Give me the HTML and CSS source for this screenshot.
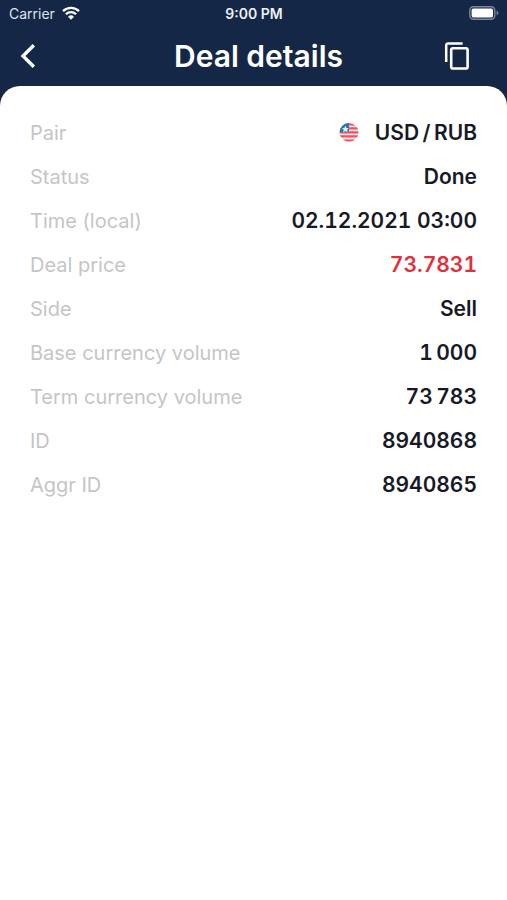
FILE: index.html
```html
<!DOCTYPE html>
<html lang="en">
<head>
<meta charset="utf-8">
<meta name="viewport" content="width=device-width, initial-scale=1">
<title>Deal details</title>
<link rel="stylesheet" href="styles.css">
</head>
<body>
<div class="status-bar">
  <div class="carrier">
    <span>Carrier</span>
    <svg class="wifi" viewBox="0 0 18 14" aria-hidden="true">
      <path d="M1 5.2a11.5 11.5 0 0 1 16 0M3.9 8.2a7.3 7.3 0 0 1 10.2 0" fill="none" stroke="currentColor" stroke-width="2.3"/>
      <path d="M9 13.8 6 10.8a4.3 4.3 0 0 1 6 0z" fill="currentColor"/>
    </svg>
  </div>
  <time class="clock">9:00 PM</time>
  <svg class="battery" viewBox="0 0 30 14" aria-hidden="true">
    <rect x="0.8" y="0.8" width="25" height="12.4" rx="3.6" fill="none" stroke="#7d879b" stroke-width="1.4"/>
    <rect x="2.6" y="2.6" width="21.4" height="8.8" rx="1.6" fill="#fff"/>
    <path d="M27.6 4.6c2.4 1 2.4 3.8 0 4.8z" fill="#7d879b"/>
  </svg>
</div>
<header class="nav">
  <button class="icon-button" type="button" aria-label="Back">
    <svg class="back-icon" viewBox="0 0 16 26" aria-hidden="true">
      <path d="M13.8 2.2 3 13l10.8 10.8" fill="none" stroke="currentColor" stroke-width="3.4"/>
    </svg>
  </button>
  <h1 class="title">Deal details</h1>
  <button class="icon-button" type="button" aria-label="Copy">
    <svg class="copy-icon" viewBox="0 0 26 28" aria-hidden="true">
      <path d="M2.2 20V3.4a2 2 0 0 1 2-2H18.6" fill="none" stroke="currentColor" stroke-width="2.5"/>
      <rect x="7.2" y="6.3" width="16.4" height="20.2" rx="1.8" fill="none" stroke="currentColor" stroke-width="2.6"/>
    </svg>
  </button>
</header>
<main class="sheet">
  <dl class="details">
    <div class="row">
      <dt>Pair</dt>
      <dd class="pair">
        <svg class="flag" viewBox="0 0 20 20" aria-hidden="true">
          <clipPath id="flag-disc"><circle cx="10" cy="9.4" r="9.4"/></clipPath>
          <g clip-path="url(#flag-disc)">
            <path d="M0 0h20v20H0z" fill="#f9e3e8"/>
            <path d="M0 1.4h20M0 5.4h20M0 9.4h20M0 13.4h20M0 17.6h20" stroke="#ee5263" stroke-width="2.1"/>
            <path d="M0 0h10v9H0z" fill="#2578b4"/>
            <path d="m6.4 2.7 1.1 2.2 2.3.3-1.7 1.6.5 2.4-2.2-1.2-2.2 1.2.5-2.4L3 5.2l2.3-.3z" fill="#e8f4fb"/>
          </g>
        </svg>
        <span>USD&#8201;/&#8201;RUB</span>
      </dd>
    </div>
    <div class="row"><dt>Status</dt><dd>Done</dd></div>
    <div class="row"><dt>Time (local)</dt><dd>02.12.2021 03:00</dd></div>
    <div class="row"><dt>Deal price</dt><dd class="sell">73.7831</dd></div>
    <div class="row"><dt>Side</dt><dd>Sell</dd></div>
    <div class="row"><dt>Base currency volume</dt><dd>1&#8201;000</dd></div>
    <div class="row"><dt>Term currency volume</dt><dd>73&#8201;783</dd></div>
    <div class="row"><dt>ID</dt><dd>8940868</dd></div>
    <div class="row"><dt>Aggr ID</dt><dd>8940865</dd></div>
  </dl>
</main>
</body>
</html>
```
FILE: styles.css
```css
* {
  box-sizing: border-box;
}

body {
  margin: 0;
  min-height: 100vh;
  display: flex;
  flex-direction: column;
  background: #152747;
  color: #fff;
  font-family: Inter, "Liberation Sans", sans-serif;
}

.status-bar {
  display: grid;
  grid-template-columns: 1fr auto 1fr;
  align-items: center;
  height: 26px;
  padding: 0 8px 0 9px;
  font-size: 14px;
}

.carrier {
  display: flex;
  align-items: center;
  gap: 7px;
  color: #dfe3ea;
}

.wifi {
  width: 18px;
  height: 14px;
  color: #fff;
}

.clock {
  font-weight: 600;
  color: #eef0f4;
}

.battery {
  width: 30px;
  height: 14px;
  justify-self: end;
}

.nav {
  display: grid;
  grid-template-columns: 44px 1fr 44px;
  align-items: center;
  height: 60px;
  padding: 0 28px 0 6px;
}

.icon-button {
  display: grid;
  place-items: center;
  width: 44px;
  height: 44px;
  padding: 0;
  border: 0;
  background: none;
  color: #fff;
}

.back-icon {
  width: 16px;
  height: 26px;
}

.copy-icon {
  width: 26px;
  height: 28px;
}

.title {
  margin: 0;
  padding-left: 32px;
  font-size: 30px;
  line-height: 36px;
  font-weight: 600;
  text-align: center;
}

.sheet {
  flex: 1;
  padding: 25px 30px;
  border-radius: 20px 20px 0 0;
  background: #fff;
}

.details {
  margin: 0;
}

.row {
  display: flex;
  align-items: center;
  justify-content: space-between;
  height: 44px;
}

dt {
  color: #c5c5c7;
  font-size: 20px;
}

dd {
  margin: 0;
  color: #171a26;
  font-size: 21px;
  line-height: 24px;
  font-weight: 600;
  font-variant-numeric: tabular-nums;
}

.sell {
  color: #e0303d;
}

.pair {
  display: flex;
  align-items: center;
  gap: 16px;
}

.flag {
  width: 20px;
  height: 20px;
}
```
